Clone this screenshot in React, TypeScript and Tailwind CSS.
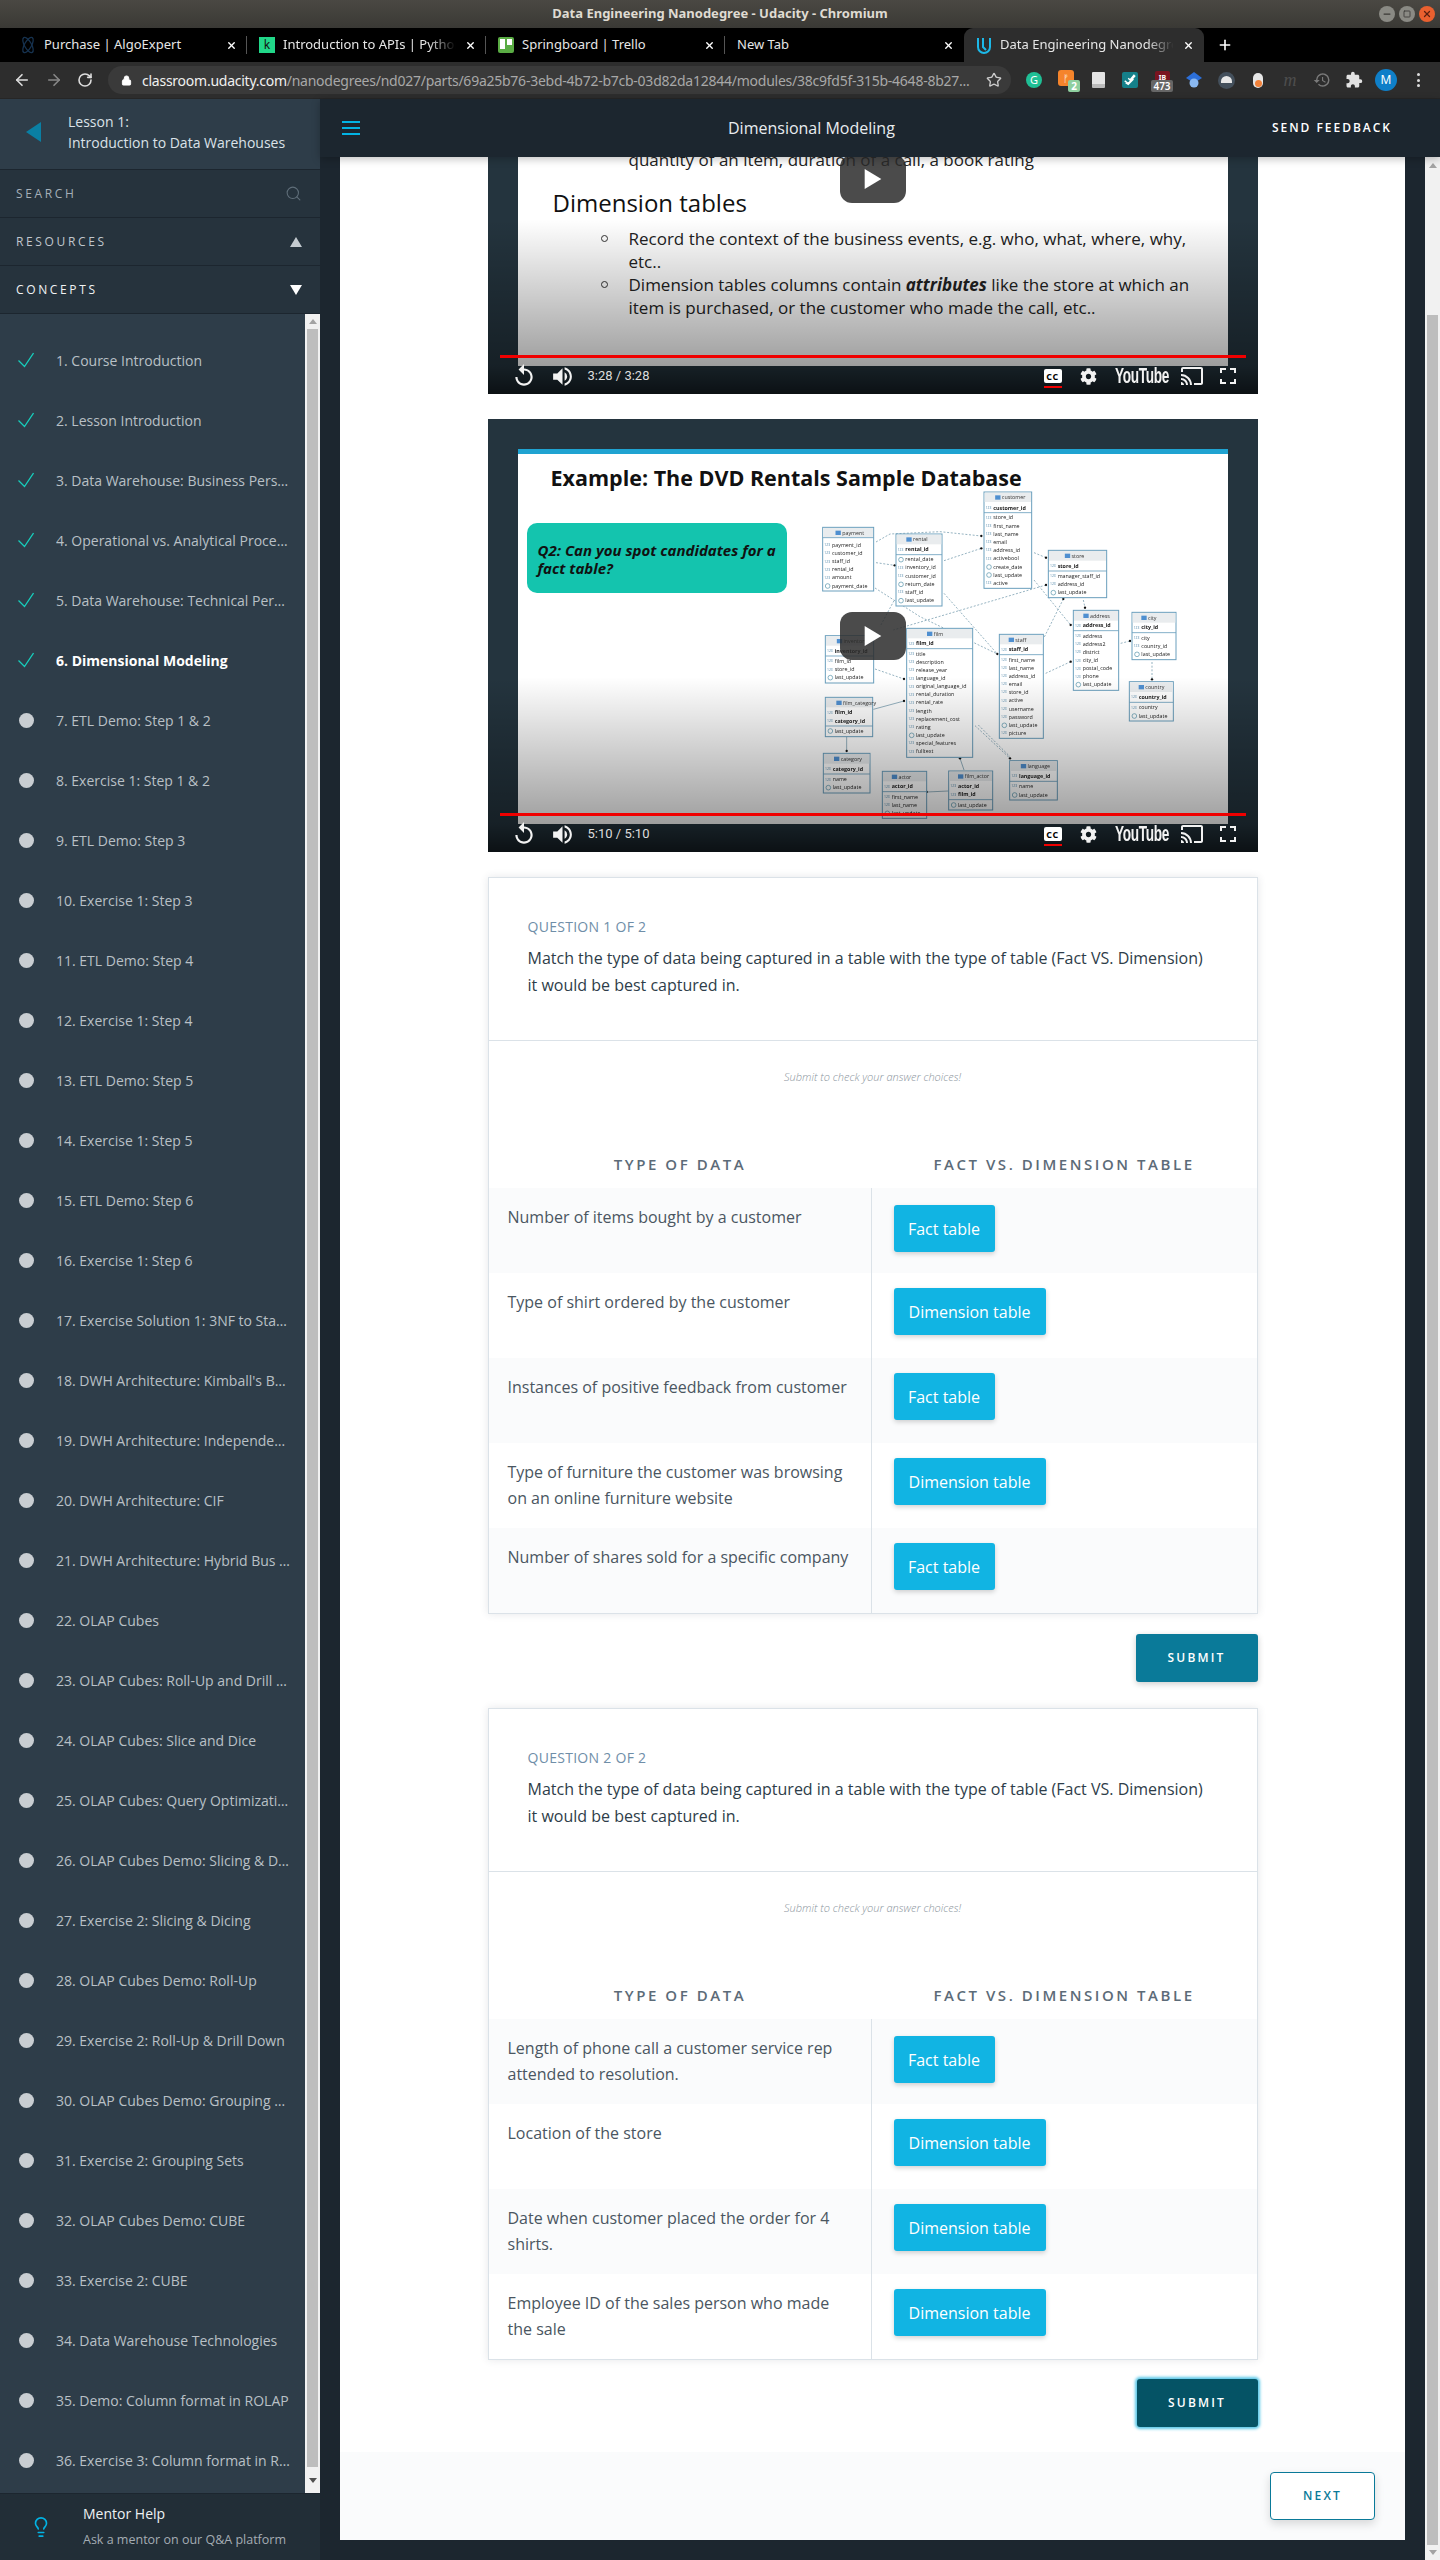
import React from "react";
import { ArrowLeft, ArrowRight, RotateCw, Lock, Star, X, Plus, Search, Lightbulb, Minus, Square } from "lucide-react";
import { MdReplay, MdVolumeUp, MdExtension, MdHistory, MdCast } from "react-icons/md";
import { FaCog } from "react-icons/fa";

type Row = [string, number, boolean?];
type T = { n: string; x: number; y: number; r: number; b: number; h: number; s: number; rows: Row[] };

const tables: T[] = [
  { n: "payment", x: 128, y: 52, r: 281, b: 243, h: 83, s: 83, rows: [["payment_id", 106], ["customer_id", 130], ["staff_id", 155], ["rental_id", 179], ["amount", 203], ["payment_date", 228]] },
  { n: "rental", x: 348, y: 72, r: 486, b: 288, h: 103, s: 134, rows: [["rental_id", 119, true], ["rental_date", 149], ["inventory_id", 173], ["customer_id", 198], ["return_date", 223], ["staff_id", 247], ["last_update", 272]] },
  { n: "customer", x: 612, y: -54, r: 755, b: 235, h: -24, s: 8, rows: [["customer_id", -6, true], ["store_id", 23], ["first_name", 48], ["last_name", 72], ["email", 96], ["address_id", 121], ["activebool", 146], ["create_date", 171], ["last_update", 195], ["active", 219]] },
  { n: "store", x: 805, y: 121, r: 980, b: 263, h: 152, s: 183, rows: [["store_id", 168, true], ["manager_staff_id", 198], ["address_id", 223], ["last_update", 248]] },
  { n: "address", x: 880, y: 301, r: 1016, b: 541, h: 332, s: 362, rows: [["address_id", 347, true], ["address", 378], ["address2", 403], ["district", 427], ["city_id", 452], ["postal_code", 476], ["phone", 500], ["last_update", 524]] },
  { n: "city", x: 1056, y: 307, r: 1188, b: 449, h: 338, s: 368, rows: [["city_id", 353, true], ["city", 384], ["country_id", 409], ["last_update", 433]] },
  { n: "country", x: 1048, y: 515, r: 1180, b: 633, h: 546, s: 577, rows: [["country_id", 562, true], ["country", 593], ["last_update", 618]] },
  { n: "film", x: 380, y: 355, r: 578, b: 742, h: 385, s: 416, rows: [["film_id", 401, true], ["title", 432], ["description", 456], ["release_year", 480], ["language_id", 506], ["original_language_id", 530], ["rental_duration", 554], ["rental_rate", 578], ["length", 603], ["replacement_cost", 627], ["rating", 651], ["last_update", 676], ["special_features", 700], ["fulltext", 725]] },
  { n: "inventory", x: 136, y: 377, r: 281, b: 519, h: 407, s: 438, rows: [["inventory_id", 423, true], ["film_id", 454], ["store_id", 479], ["last_update", 503]] },
  { n: "staff", x: 658, y: 373, r: 790, b: 685, h: 403, s: 434, rows: [["staff_id", 419, true], ["first_name", 450], ["last_name", 474], ["address_id", 498], ["email", 523], ["store_id", 547], ["active", 572], ["username", 597], ["password", 621], ["last_update", 646], ["picture", 670]] },
  { n: "film_category", x: 136, y: 562, r: 278, b: 680, h: 592, s: 648, rows: [["film_id", 608, true], ["category_id", 633, true], ["last_update", 663]] },
  { n: "category", x: 130, y: 730, r: 270, b: 849, h: 761, s: 792, rows: [["category_id", 777, true], ["name", 809], ["last_update", 833]] },
  { n: "actor", x: 307, y: 784, r: 440, b: 925, h: 814, s: 845, rows: [["actor_id", 830, true], ["first_name", 861], ["last_name", 886], ["last_update", 910]] },
  { n: "film_actor", x: 506, y: 783, r: 638, b: 900, h: 813, s: 869, rows: [["actor_id", 829, true], ["film_id", 854, true], ["last_update", 885]] },
  { n: "language", x: 689, y: 752, r: 832, b: 870, h: 783, s: 814, rows: [["language_id", 799, true], ["name", 829], ["last_update", 855]] },
];

const links: [string, boolean?][] = [
  ["288,96 330,72 480,65 604,78"], ["288,158 344,166"], ["492,152 604,115"], ["285,234 420,320 652,432"], ["342,272 300,350"],
  ["492,250 652,432"], ["762,128 798,143"], ["762,210 872,345"], ["798,225 340,360"], ["850,267 792,383"], ["910,270 915,293"],
  ["797,490 872,455"], ["1022,400 1050,393"], ["1116,456 1116,508"], ["285,477 372,507"], ["280,598 372,573", true], ["200,680 200,723", true],
  ["540,745 552,780", true], ["585,647 690,745"], ["595,645 690,740"], ["440,846 505,843", true],
];
const dots = [[604, 78], [344, 166], [604, 115], [652, 432], [798, 143], [872, 345], [798, 225], [850, 267], [915, 293], [872, 455], [1050, 393], [1116, 508], [372, 507], [372, 573], [200, 723], [540, 745], [690, 745], [440, 846]];

function ErDiagram() {
  return (
    <svg viewBox="0 -90 1440 1035" className="absolute left-[262px] top-[31px] w-[480px] h-[345px] blur-[0.3px]">
      {links.map(([p, solid], i) => (
        <polyline key={i} points={p} fill="none" stroke="#6f97aa" strokeWidth="2.2" strokeDasharray={solid ? undefined : "6 5"} />
      ))}
      {dots.map(([x, y], i) => <circle key={i} cx={x} cy={y} r="3.5" fill="#111" />)}
      {tables.map((t) => (
        <g key={t.n} fontFamily="Open Sans, sans-serif">
          <rect x={t.x} y={t.y} width={t.r - t.x} height={t.b - t.y} fill="#fff" stroke="#6a9fbd" strokeWidth="3" />
          <rect x={t.x + 2} y={t.y + 2} width={t.r - t.x - 4} height={t.h - t.y - 2} fill="#e9ecee" />
          <line x1={t.x} x2={t.r} y1={t.s} y2={t.s} stroke="#6a9fbd" strokeWidth="2.5" />
          <rect x={(t.x + t.r) / 2 - 38} y={t.y + 10} width="16" height="13" fill="#4f8fd0" />
          <text x={(t.x + t.r) / 2 - 18} y={t.y + 22} fontSize="16" fill="#333">{t.n}</text>
          {t.rows.map(([name, y, bold]) => (
            <g key={name}>
              {/update|date$/.test(name) ? (
                <circle cx={t.x + 15} cy={y} r="7" fill="none" stroke="#4f8fa8" strokeWidth="2" />
              ) : (
                <text x={t.x + 5} y={y + 3} fontSize="10" fill="#4f86a8">123</text>
              )}
              <text x={t.x + 28} y={y + 5} fontSize="16" fontWeight={bold ? 700 : 500} fill="#222">{name}</text>
            </g>
          ))}
        </g>
      ))}
    </svg>
  );
}

function VideoOverlay({ time }: { time: string }) {
  return (
    <>
      <div className="absolute inset-x-0 bottom-0 h-[175px] bg-[linear-gradient(to_bottom,transparent,rgba(0,0,0,.38)_84%,rgba(0,0,0,.68))]" />
      <div className="absolute left-[12px] right-[12px] bottom-[36px] h-[3px] bg-[#f00000]" />
      <div className="absolute inset-x-0 bottom-0 h-[36px] text-[#f2f2f2] flex items-center">
        <MdReplay className="w-[26px] h-[26px] ml-[23px] shrink-0" />
        <MdVolumeUp className="w-[25px] h-[25px] ml-[13px] shrink-0" />
        <span className="ml-[13px] text-[13px] font-['Roboto',sans-serif] text-[#ddd]">{time}</span>
        <div className="ml-auto relative w-[18px] h-[14px] bg-white rounded-[2px] flex items-center justify-center text-black text-[9px] font-bold leading-none tracking-[0.5px]">CC
          <div className="absolute -bottom-[5px] left-0 right-0 h-[2px] bg-[#f00000]" />
        </div>
        <FaCog className="w-[17px] h-[17px] ml-[18px] shrink-0" />
        <span className="ml-[18px] w-[52px] text-[22px] font-bold leading-none font-['Liberation_Sans',sans-serif] whitespace-nowrap origin-left scale-x-[0.62] tracking-[-0.5px]">YouTube</span>
        <MdCast className="w-[24px] h-[24px] ml-[13px] shrink-0" />
        <svg viewBox="0 0 16 16" className="w-[16px] h-[16px] ml-[16px] mr-[22px] shrink-0" fill="none" stroke="#f2f2f2" strokeWidth="2">
          <path d="M1 5V1h5M10 1h5v4M15 11v4h-5M6 15H1v-4" />
        </svg>
      </div>
    </>
  );
}

function PlayBtn({ pos }: { pos: string }) {
  return (
    <div className={`absolute ${pos} w-[66px] h-[48px] rounded-[12px] bg-[#2b2b2b]/85 flex items-center justify-center`}>
      <svg viewBox="0 0 20 24" className="w-[18px] h-[20px]"><path d="M0 0l20 12L0 24z" fill="#fff" /></svg>
    </div>
  );
}

function Bullet({ children }: { children: React.ReactNode }) {
  return (
    <div className="flex items-start">
      <div className="mt-[8px] ml-[83px] w-[7px] h-[7px] rounded-full border border-[#333] shrink-0" />
      <div className="ml-[21px] w-[580px] text-[17px] leading-[23px] text-[#222]">{children}</div>
    </div>
  );
}

function VideoOne() {
  return (
    <div className="relative h-[237px] w-[770px] bg-[#24343e] overflow-hidden flex flex-col">
      <div className="mx-[30px] h-[209px] bg-white overflow-hidden">
        <div className="-mt-[9px] ml-[111px] text-[17px] leading-[23px] text-[#222] whitespace-nowrap">quantity of an item, duration of a call, a book rating</div>
        <div className="mt-[16px] ml-[35px] text-[24px] leading-[32px] text-[#111]">Dimension tables</div>
        <div className="mt-[8px]">
          <Bullet>Record the context of the business events, e.g. who, what, where, why, etc..</Bullet>
          <Bullet>Dimension tables columns contain <b><i>attributes</i></b> like the store at which an item is purchased, or the customer who made the call, etc..</Bullet>
        </div>
      </div>
      <VideoOverlay time="3:28 / 3:28" />
      <PlayBtn pos="left-[352px] -top-[2px]" />
    </div>
  );
}

function VideoTwo() {
  return (
    <div className="relative h-[433px] w-[770px] bg-[#24343e] overflow-hidden pt-[30px]">
      <div className="relative mx-[30px] h-[375px] bg-white">
        <div className="h-[5px] bg-[#1fa3d1]" />
        <div className="mt-[8px] ml-[33px] text-[21.5px] leading-[32px] font-bold text-[#111]">Example: The DVD Rentals Sample Database</div>
        <div className="mt-[29px] ml-[9px] w-[260px] h-[70px] rounded-[10px] bg-[#14c4ae] pl-[11px] pt-[18px] text-[15px] leading-[18px] font-bold italic text-[#111]">Q2: Can you spot candidates for a fact table?</div>
        <ErDiagram />
      </div>
      <VideoOverlay time="5:10 / 5:10" />
      <PlayBtn pos="left-[352px] top-[193px]" />
    </div>
  );
}

function Choice({ label }: { label: string }) {
  const w = label === "Fact table" ? "w-[101px]" : "w-[152px]";
  return <div className={`${w} h-[47px] rounded-[3px] bg-[#11b4e3] text-white text-[16px] flex items-center justify-center shadow-[0_2px_5px_rgba(0,0,0,.18)]`}>{label}</div>;
}

function Card({ index, rows }: { index: number; rows: [string, string][] }) {
  return (
    <div className="w-[770px] bg-white border border-[#dbe2e8] shadow-[0_0_8px_rgba(46,61,73,.12)]">
      <div className="h-[163px] pt-[39px] px-[39px] border-b border-[#dbe2e8]">
        <div className="text-[14px] leading-[20px] tracking-[0.02em] text-[#6f8ea8]">QUESTION {index} OF 2</div>
        <div className="mt-[8px] w-[680px] text-[16px] leading-[27px] text-[#2e3d49]">Match the type of data being captured in a table with the type of table (Fact VS. Dimension) it would be best captured in.</div>
      </div>
      <div className="h-[147px] pt-[28px]">
        <div className="text-center text-[11px] leading-[16px] italic font-light text-[#8a949c]">Submit to check your answer choices!</div>
        <div className="mt-[69px] grid grid-cols-[383px_1fr] text-center text-[15px] leading-[20px] font-semibold tracking-[0.17em] text-[#5c6b78]">
          <div>TYPE OF DATA</div>
          <div>FACT VS. DIMENSION TABLE</div>
        </div>
      </div>
      {rows.map(([text, label], i) => (
        <div key={text} className={`grid grid-cols-[383px_1fr] h-[85px] ${i % 2 === 0 ? "bg-[#fafbfc]" : "bg-white"}`}>
          <div className="border-r border-[#dbe2e8] pl-[19px] pr-[16px] pt-[16px] text-[16px] leading-[26px] text-[#4a5661]">{text}</div>
          <div className={`pl-[22px] ${i === 0 ? "pt-[17px]" : "pt-[15px]"}`}><Choice label={label} /></div>
        </div>
      ))}
    </div>
  );
}

const lessons = [
  "1. Course Introduction", "2. Lesson Introduction", "3. Data Warehouse: Business Perspective", "4. Operational vs. Analytical Processes", "5. Data Warehouse: Technical Perspective", "6. Dimensional Modeling",
  "7. ETL Demo: Step 1 & 2", "8. Exercise 1: Step 1 & 2", "9. ETL Demo: Step 3", "10. Exercise 1: Step 3", "11. ETL Demo: Step 4", "12. Exercise 1: Step 4", "13. ETL Demo: Step 5", "14. Exercise 1: Step 5", "15. ETL Demo: Step 6", "16. Exercise 1: Step 6",
  "17. Exercise Solution 1: 3NF to Star Schema", "18. DWH Architecture: Kimball's Bus Architecture", "19. DWH Architecture: Independent Data Marts", "20. DWH Architecture: CIF", "21. DWH Architecture: Hybrid Bus & CIF", "22. OLAP Cubes", "23. OLAP Cubes: Roll-Up and Drill Down", "24. OLAP Cubes: Slice and Dice", "25. OLAP Cubes: Query Optimization", "26. OLAP Cubes Demo: Slicing & Dicing", "27. Exercise 2: Slicing & Dicing", "28. OLAP Cubes Demo: Roll-Up", "29. Exercise 2: Roll-Up & Drill Down", "30. OLAP Cubes Demo: Grouping Sets", "31. Exercise 2: Grouping Sets", "32. OLAP Cubes Demo: CUBE", "33. Exercise 2: CUBE", "34. Data Warehouse Technologies", "35. Demo: Column format in ROLAP", "36. Exercise 3: Column format in ROLAP",
];

function Tab({ icon, label, active, sep, fade }: { icon: React.ReactNode; label: string; active?: boolean; sep?: boolean; fade?: boolean }) {
  return (
    <div className={`relative flex items-center h-[34px] shrink-0 pl-[12px] pr-[10px] ${active ? "w-[240px] bg-[#2d2d2d] rounded-t-[9px]" : "w-[239px]"}`}>
      {icon}
      <div className={`ml-[8px] flex-1 overflow-hidden whitespace-nowrap text-[13px] text-[#e6e6e6] ${fade ? "[mask-image:linear-gradient(to_right,black_82%,transparent_97%)]" : ""}`}>{label}</div>
      <X className="w-[11px] h-[11px] text-white ml-[4px] shrink-0" strokeWidth={3} />
      {sep && <div className="absolute right-0 top-[8px] h-[18px] w-px bg-[#555]" />}
    </div>
  );
}

function ExtIcons() {
  return (
    <div className="flex items-center ml-[7px]">
      <div className="w-[32px] flex justify-center"><div className="w-[16px] h-[16px] rounded-full bg-[#1fbf95] text-white text-[11px] flex items-center justify-center">G</div></div>
      <div className="relative w-[32px] h-[22px]"><div className="absolute left-[8px] top-[1px] w-[16px] h-[16px] rounded-[3px] bg-[#f5842b] text-white text-[10px] leading-[16px] text-center">ᚠ</div><div className="absolute left-[18px] top-[11px] w-[12px] h-[12px] rounded-[2px] bg-[#8fcf9f] text-white text-[10px] font-bold leading-[12px] text-center">2</div></div>
      <div className="w-[32px] flex justify-center"><div className="w-[13px] h-[16px] bg-[#e4e4e4] rounded-[1px] border-b-[4px] border-[#bbb]" /></div>
      <div className="w-[32px] flex justify-center"><div className="w-[16px] h-[16px] rounded-[2px] bg-[#15808a] flex items-center justify-center"><svg viewBox="0 0 16 16" className="w-[14px] h-[14px]" fill="none" stroke="#fff" strokeWidth="1.6"><path d="M2 9l4 3 8-9M3 11l3 2 6-6M6 6l2 2 5-6" /></svg></div></div>
      <div className="relative w-[32px] h-[22px]"><div className="absolute left-[9px] top-[2px] w-[15px] h-[12px] rounded-t-[2px] bg-[#7a1420] text-white text-[7px] font-bold leading-[14px] text-center">IB</div><div className="absolute left-[5px] top-[11px] w-[22px] h-[12px] rounded-[2px] bg-[#666] text-white text-[10px] font-semibold leading-[12px] text-center">473</div></div>
      <div className="w-[32px] flex justify-center"><svg viewBox="0 0 16 16" className="w-[16px] h-[16px]"><path d="M8 0l8 6-8 5-8-5z" fill="#2c6fd9" /><circle cx="8" cy="11" r="4.5" fill="#8ab8f0" /></svg></div>
      <div className="w-[32px] flex justify-center"><div className="w-[17px] h-[17px] rounded-full bg-[#44505c] relative overflow-hidden"><div className="absolute left-[3px] top-[4px] w-[11px] h-[7px] rounded-t-full bg-[#e8e8e8]" /></div></div>
      <div className="w-[32px] flex justify-center"><div className="w-[10px] h-[15px] rounded-full bg-[#e6e6e6] flex items-end justify-center pb-[1px]"><div className="w-[7px] h-[7px] rounded-full bg-[#f2823a]" /></div></div>
      <div className="w-[32px] text-center text-[#4d4d4d] text-[18px] italic leading-none font-['Liberation_Serif',serif]">m</div>
      <div className="w-[32px] flex justify-center"><MdHistory className="w-[18px] h-[18px] text-[#7a7a7a]" /></div>
      <div className="w-[32px] flex justify-center"><MdExtension className="w-[18px] h-[18px] text-[#e2e2e2]" /></div>
      <div className="w-[32px] flex justify-center"><div className="w-[22px] h-[22px] rounded-full bg-[#0f7fc8] text-white text-[12px] flex items-center justify-center">M</div></div>
      <div className="w-[32px] flex flex-col items-center gap-[2.5px]"><div className="w-[3px] h-[3px] rounded-full bg-[#ddd]" /><div className="w-[3px] h-[3px] rounded-full bg-[#ddd]" /><div className="w-[3px] h-[3px] rounded-full bg-[#ddd]" /></div>
    </div>
  );
}

function BrowserChrome() {
  return (
    <div className="shrink-0 font-['Noto_Sans',sans-serif]">
      <div className="relative h-[28px] bg-[linear-gradient(to_bottom,#4a4843,#3a3935)] flex items-center justify-center text-[13px] font-bold text-[#dfdbd2]">
        Data Engineering Nanodegree - Udacity - Chromium
        <div className="absolute right-[5px] top-[6px] flex gap-[4px]">
          <div className="w-[16px] h-[16px] rounded-full bg-[#8a8a84] flex items-center justify-center"><Minus className="w-[10px] h-[10px] text-[#3a3935]" strokeWidth={3} /></div>
          <div className="w-[16px] h-[16px] rounded-full bg-[#8a8a84] flex items-center justify-center"><Square className="w-[8px] h-[8px] text-[#3a3935]" strokeWidth={2.5} /></div>
          <div className="w-[16px] h-[16px] rounded-full bg-[#e9602f] flex items-center justify-center"><X className="w-[10px] h-[10px] text-[#5a2010]" strokeWidth={3} /></div>
        </div>
      </div>
      <div className="h-[34px] bg-black flex pl-[8px]">
        <Tab sep label="Purchase | AlgoExpert" icon={<svg viewBox="0 0 16 18" className="w-[16px] h-[18px] shrink-0" fill="none" stroke="#16324f" strokeWidth="1.3"><ellipse cx="8" cy="9" rx="3.5" ry="8.5" transform="rotate(-30 8 9)" /><ellipse cx="8" cy="9" rx="3.5" ry="8.5" transform="rotate(30 8 9)" /></svg>} />
        <Tab sep fade label="Introduction to APIs | Python Programming" icon={<div className="w-[16px] h-[16px] shrink-0 bg-[#21d789] text-[#111] text-[12px] leading-[16px] text-center">k</div>} />
        <Tab sep label="Springboard | Trello" icon={<div className="w-[16px] h-[16px] shrink-0 rounded-[2px] bg-[#5aac44] flex gap-[2px] p-[2px]"><div className="w-[5px] h-[10px] bg-white" /><div className="w-[5px] h-[6px] bg-white" /></div>} />
        <Tab label="New Tab" icon={<div className="w-0 -ml-[8px]" />} />
        <Tab active fade label="Data Engineering Nanodegree" icon={<svg viewBox="0 0 16 18" className="w-[16px] h-[18px] shrink-0" fill="none" stroke="#1cb8e8" strokeWidth="2"><path d="M2 2v9a6 6 0 0 0 12 0V2" /><path d="M7 2v9l3 3" /></svg>} />
        <Plus className="w-[16px] h-[16px] text-white self-center ml-[13px]" strokeWidth={2.4} />
      </div>
      <div className="h-[37px] bg-[#2d2d2d] border-b border-[#262626] flex items-center text-[#ddd]">
        <ArrowLeft className="w-[18px] h-[18px] ml-[13px]" strokeWidth={2.2} />
        <ArrowRight className="w-[18px] h-[18px] ml-[14px] text-[#888]" strokeWidth={2.2} />
        <RotateCw className="w-[16px] h-[16px] ml-[14px]" strokeWidth={2.4} />
        <div className="ml-[15px] w-[903px] h-[28px] rounded-[14px] bg-[#3a3a3a] flex items-center pl-[13px] text-[14px] tracking-[-0.25px] whitespace-nowrap">
          <Lock className="w-[11px] h-[11px] text-white fill-white shrink-0" />
          <span className="ml-[10px] text-[#f0f0f0]">classroom.udacity.com</span>
          <span className="text-[#a8a8a8]">/nanodegrees/nd027/parts/69a25b76-3ebd-4b72-b7cb-03d82da12844/modules/38c9fd5f-315b-4648-8b27...</span>
          <Star className="w-[16px] h-[16px] ml-auto mr-[9px] text-[#ccc] shrink-0" strokeWidth={2} />
        </div>
        <ExtIcons />
      </div>
    </div>
  );
}

function Sidebar() {
  return (
    <aside className="w-[320px] shrink-0 flex flex-col bg-[#2e3d49]">
      <div className="h-[71px] shrink-0 flex items-center border-b border-[#1c262f] pb-[4px]">
        <svg viewBox="0 0 15 20" className="w-[15px] h-[20px] ml-[26px]"><path d="M15 0v20L0 10z" fill="#0a7fa3" /></svg>
        <div className="ml-[27px] text-[14px] leading-[21px] text-[#dbe2e8]">Lesson 1:<br />Introduction to Data Warehouses</div>
      </div>
      {[
        ["SEARCH", "text-[#a5afb8]"], ["RESOURCES", "text-[#c0c7cd]"], ["CONCEPTS", "text-[#f0f2f4]"],
      ].map(([t, c], i) => (
        <div key={t} className={`h-[48px] shrink-0 bg-[#26333d] border-b border-[#1c262f] flex items-center justify-between pl-[16px] pr-[18px] text-[12px] tracking-[0.22em] ${c}`}>
          {t}
          {i === 0 && <Search className="w-[17px] h-[17px] text-[#5f6e79]" strokeWidth={1.5} />}
          {i === 1 && <svg viewBox="0 0 12 10" className="w-[12px] h-[10px]"><path d="M6 0l6 10H0z" fill="#c4cbd0" /></svg>}
          {i === 2 && <svg viewBox="0 0 12 10" className="w-[12px] h-[10px]"><path d="M6 10L0 0h12z" fill="#fff" /></svg>}
        </div>
      ))}
      <div className="flex-1 min-h-0 flex overflow-hidden">
        <div className="flex-1 min-w-0 pt-[16px]">
          {lessons.map((l, i) => (
            <div key={l} className="h-[60px] flex items-center">
              <div className="ml-[18px] w-[16px] flex justify-center shrink-0">
                {i < 6 ? (
                  <svg viewBox="0 0 16 16" className="w-[16px] h-[16px]" fill="none" stroke="#17cdbb" strokeWidth="1.3"><path d="M0.5 8.5L6.5 14.5L15.5 1" /></svg>
                ) : <div className="w-[15px] h-[15px] rounded-full bg-[#c9ced2]" />}
              </div>
              <div className={`ml-[22px] w-[234px] truncate text-[14px] ${i === 5 ? "font-bold text-white" : "text-[#b9c0c6]"}`}>{l}</div>
            </div>
          ))}
        </div>
        <div className="w-[15px] shrink-0 bg-[#f1f1f1] flex flex-col items-center">
          <div className="h-[15px] flex items-center"><div className="w-0 h-0 border-x-[4px] border-x-transparent border-b-[5px] border-b-[#a3a3a3]" /></div>
          <div className="w-[11px] flex-1 bg-[#bdbdbd]" />
          <div className="h-[26px] flex items-center"><div className="w-0 h-0 border-x-[4px] border-x-transparent border-t-[5px] border-t-[#505050]" /></div>
        </div>
      </div>
      <div className="h-[67px] shrink-0 bg-[#222e37] border-t border-[#1c262f] flex items-center">
        <Lightbulb className="w-[22px] h-[22px] ml-[30px] text-[#02b3e4]" strokeWidth={1.8} />
        <div className="ml-[31px]">
          <div className="text-[14px] leading-[26px] text-[#eef1f3]">Mentor Help</div>
          <div className="text-[12.5px] leading-[26px] text-[#a4acb3]">Ask a mentor on our Q&amp;A platform</div>
        </div>
      </div>
    </aside>
  );
}

const q1: [string, string][] = [
  ["Number of items bought by a customer", "Fact table"],
  ["Type of shirt ordered by the customer", "Dimension table"],
  ["Instances of positive feedback from customer", "Fact table"],
  ["Type of furniture the customer was browsing on an online furniture website", "Dimension table"],
  ["Number of shares sold for a specific company", "Fact table"],
];
const q2: [string, string][] = [
  ["Length of phone call a customer service rep attended to resolution.", "Fact table"],
  ["Location of the store", "Dimension table"],
  ["Date when customer placed the order for 4 shirts.", "Dimension table"],
  ["Employee ID of the sales person who made the sale", "Dimension table"],
];

export default function App() {
  return (
    <div className="w-[1440px] h-[2560px] flex flex-col overflow-hidden font-['Open_Sans',sans-serif] bg-[#1c262f]">
      <BrowserChrome />
      <div className="flex-1 min-h-0 flex">
        <Sidebar />
        <div className="flex-1 min-w-0 flex flex-col">
          <header className="relative z-10 h-[58px] shrink-0 bg-[#1c262f] flex items-center shadow-[0_2px_8px_rgba(0,0,0,.25)]">
            <div className="ml-[22px] w-[18px] h-[14px] flex flex-col justify-between">
              <div className="h-[2px] bg-[#02b3e4]" /><div className="h-[2px] bg-[#02b3e4]" /><div className="h-[2px] bg-[#02b3e4]" />
            </div>
            <div className="ml-[368px] text-[16px] text-[#e8ecef]">Dimensional Modeling</div>
            <div className="ml-auto mr-[48px] text-[12px] font-semibold tracking-[0.165em] text-white">SEND FEEDBACK</div>
          </header>
          <div className="flex-1 min-h-0 flex">
            <div className="w-[20px] shrink-0" />
            <main className="w-[1065px] h-[2383px] shrink-0 bg-white flex flex-col">
              <div className="flex-1 flex flex-col items-center">
                <VideoOne />
                <div className="mt-[25px]"><VideoTwo /></div>
                <div className="mt-[25px]"><Card index={1} rows={q1} /></div>
                <div className="w-[770px] mt-[20px] flex justify-end">
                  <div className="w-[122px] h-[48px] rounded-[3px] bg-[#0a7a99] text-white text-[12px] font-semibold tracking-[0.18em] flex items-center justify-center shadow-[0_2px_6px_rgba(0,0,0,.2)]">SUBMIT</div>
                </div>
                <div className="mt-[26px]"><Card index={2} rows={q2} /></div>
                <div className="w-[770px] mt-[19px] flex justify-end">
                  <div className="w-[121px] h-[48px] rounded-[3px] bg-[#055365] text-white text-[12px] font-semibold tracking-[0.18em] flex items-center justify-center shadow-[0_0_3px_2px_#5bc8e8]">SUBMIT</div>
                </div>
              </div>
              <div className="h-[88px] shrink-0 bg-[#fafbfc] flex items-start justify-end pt-[20px] pr-[30px]">
                <div className="w-[105px] h-[48px] rounded-[4px] bg-white border border-[#0a7a99] text-[#0a7a99] text-[12px] font-semibold tracking-[0.18em] flex items-center justify-center shadow-[0_4px_10px_rgba(0,0,0,.14)]">NEXT</div>
              </div>
            </main>
            <div className="w-[20px] shrink-0" />
            <div className="w-[15px] shrink-0 bg-[#f1f1f1] flex flex-col items-center">
              <div className="h-[158px] flex items-start pt-[6px]"><div className="w-0 h-0 border-x-[4px] border-x-transparent border-b-[5px] border-b-[#a3a3a3]" /></div>
              <div className="w-[11px] flex-1 bg-[#bdbdbd]" />
              <div className="h-[15px] flex items-center"><div className="w-0 h-0 border-x-[4px] border-x-transparent border-t-[5px] border-t-[#a3a3a3]" /></div>
            </div>
          </div>
        </div>
      </div>
    </div>
  );
}
